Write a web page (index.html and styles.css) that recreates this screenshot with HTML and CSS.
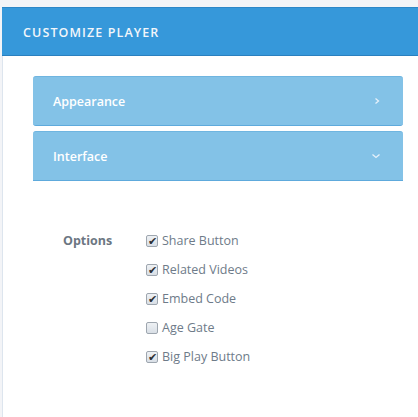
FILE: index.html
```html
<html>
<head>
	<meta charset="UTF-8">
	<title>Customize Player</title>
	<link rel="stylesheet" href="styles.css">
</head>
<body>
	<div class="panel">
		<div class="panel-heading">Customize Player</div>
		<div class="panel-body">
			<div class="accordion">
				<div class="acc-item">
					<span>Appearance</span>
					<svg class="chev" width="8" height="8" viewBox="0 0 8 8"><path d="M2.5 1.5 L5.5 4 L2.5 6.5" fill="none" stroke="#e6f1fa" stroke-width="1.3"/></svg>
				</div>
				<div class="acc-item open">
					<span>Interface</span>
					<svg class="chev" width="10" height="8" viewBox="0 0 10 8"><path d="M1.5 2.5 L5 5.5 L8.5 2.5" fill="none" stroke="#e6f1fa" stroke-width="1.3"/></svg>
				</div>
			</div>
			<div class="options">
				<div class="opt-label">Options</div>
				<div class="opt-list">
					<label class="check"><span class="box on"></span>Share Button</label>
					<label class="check"><span class="box on"></span>Related Videos</label>
					<label class="check"><span class="box on"></span>Embed Code</label>
					<label class="check"><span class="box"></span>Age Gate</label>
					<label class="check"><span class="box on"></span>Big Play Button</label>
				</div>
			</div>
		</div>
	</div>
</body>
</html>
```

FILE: styles.css
```css
body {
	margin: 0;
	background: #f3f4f7;
	font-family: "Open Sans", sans-serif;
	overflow: hidden;
}
.panel {
	margin: 7px 0 0 2px;
	height: 410px;
	display: flex;
	flex-direction: column;
}
.panel-heading {
	height: 47px;
	background: #3698da;
	border-top: 1px solid #2d87c7;
	border-bottom: 1px solid #2a80bf;
	color: #f2f6fa;
	text-transform: uppercase;
	font-size: 12.5px;
	font-weight: 600;
	letter-spacing: 1.1px;
	line-height: 49px;
	padding-left: 21px;
}
.panel-body {
	flex: 1;
	background: #fff;
	border-left: 1px solid #dde5ee;
	padding: 20px 15px 0 30px;
}
.acc-item {
	height: 48px;
	background: #83c2e7;
	border-top: 1px solid #6fb5e0;
	border-bottom: 1px solid #5eaadc;
	border-radius: 3px;
	color: #fff;
	font-size: 12.5px;
	font-weight: 600;
	display: flex;
	align-items: center;
	justify-content: space-between;
	padding: 0 22px 0 20px;
	margin-bottom: 5px;
}
.acc-item.open {
	border-radius: 3px 3px 0 0;
	margin-bottom: 0;
}
.options {
	display: flex;
	padding: 51px 0 0 30px;
}
.opt-label {
	width: 83px;
	font-size: 12.5px;
	font-weight: 700;
	color: #6c7682;
	line-height: 18px;
}
.opt-list {
	display: flex;
	flex-direction: column;
	gap: 11px;
}
.check {
	display: flex;
	align-items: center;
	font-size: 12.5px;
	color: #6e7b89;
	line-height: 18px;
}
.box {
	width: 10px;
	height: 10px;
	border: 1px solid #9ea6af;
	border-radius: 2px;
	background: linear-gradient(#eef1f4, #d9dfe6);
	margin-right: 4px;
	position: relative;
}
.box.on::after {
	content: "\2714";
	position: absolute;
	left: 1px;
	top: -4px;
	font-size: 10.5px;
	color: #2c2f33;
}
```
